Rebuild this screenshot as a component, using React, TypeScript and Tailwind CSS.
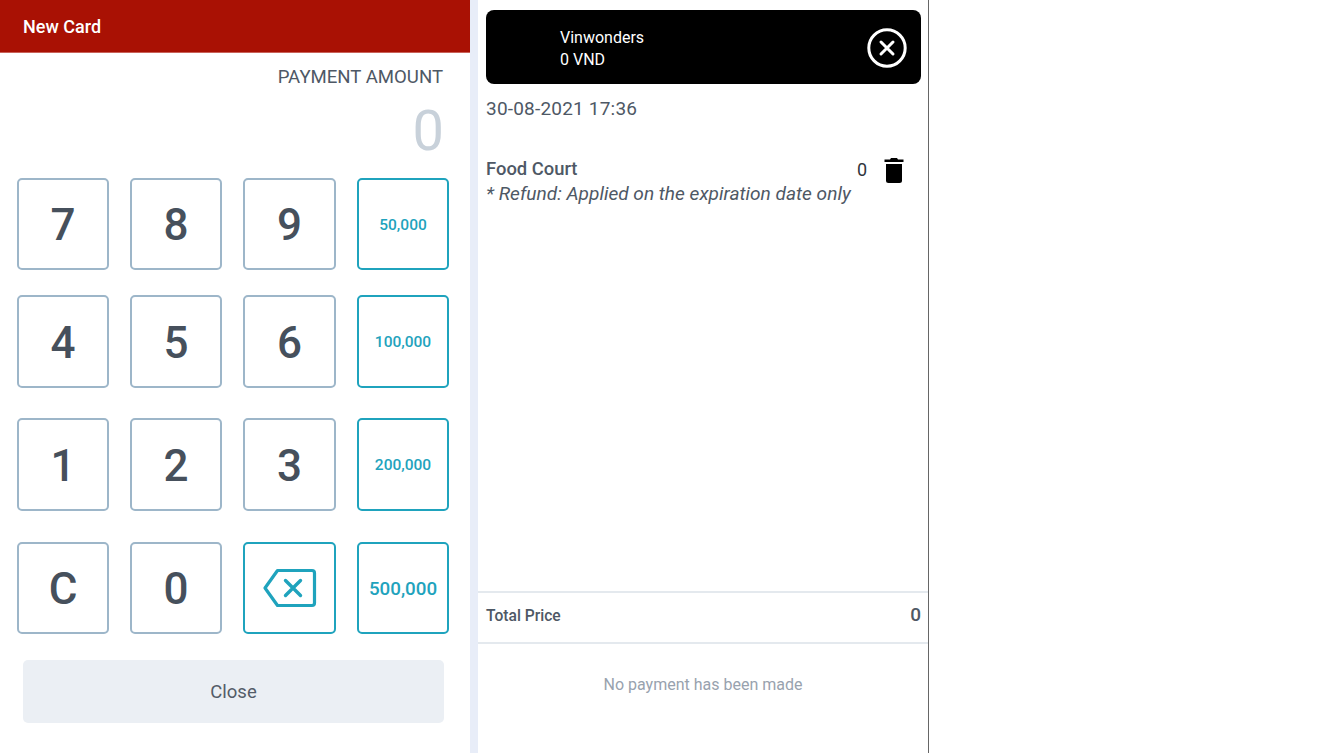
const NUM_KEY = "flex h-full items-center justify-center rounded-[5px] border-2 border-[#9db6c9] bg-white pt-[2px] text-[44px] font-[550] text-[#46505c]";
const QUICK_KEY = "flex h-full items-center justify-center rounded-[5px] border-2 border-[#1fa3bd] bg-white font-medium text-[#1fa3bd]";

function BackspaceIcon() {
  return (
    <svg width="54" height="40" viewBox="0 0 54 40" fill="none" stroke="#1fa3bd">
      <path d="M14.5 2.5H49a2.5 2.5 0 0 1 2.5 2.5v30a2.5 2.5 0 0 1-2.5 2.5H14.5L2 20Z" strokeWidth="3.2" strokeLinejoin="round" />
      <path d="M22.5 12.5l15 15M37.5 12.5l-15 15" strokeWidth="3.4" strokeLinecap="round" />
    </svg>
  );
}

function CloseCircleIcon() {
  return (
    <svg width="40" height="40" viewBox="0 0 40 40" fill="none" stroke="#fff">
      <circle cx="20" cy="20" r="18.2" strokeWidth="3" />
      <path d="M14 14l12 12M26 14L14 26" strokeWidth="3" strokeLinecap="round" />
    </svg>
  );
}

function TrashIcon() {
  return (
    <svg width="20" height="25" viewBox="0 0 20 25" fill="#000">
      <path d="M7 0h6l1 1.5h5.5V4H.5V1.5H6Z" />
      <path d="M2 6h16v16.5a2.5 2.5 0 0 1-2.5 2.5h-11A2.5 2.5 0 0 1 2 22.5Z" />
    </svg>
  );
}

export default function App() {
  return (
    <div className="flex h-[753px] w-[1319px] overflow-hidden bg-white font-['Roboto',sans-serif]">
      {/* keypad */}
      <div className="flex w-[470px] flex-col">
        <div className="flex h-[53px] items-center border-b border-[#c9625a] bg-[#a91104] pt-[2px] pl-[23px] text-lg font-medium text-white">
          New Card
        </div>
        <div className="mt-3 pr-[27px] text-right text-[18.6px] leading-6 text-[#4e5865]">PAYMENT AMOUNT</div>
        <div className="mt-[12px] mb-[-2px] pr-[26px] text-right text-[56px] leading-[60px] text-[#c8d1da]">0</div>

        <div className="mt-[19px] grid grid-cols-[92px_92px_93px_92px] gap-x-[21px] pl-[17px]">
          <div className="col-span-4 grid h-[92px] grid-cols-subgrid">
            <button className={NUM_KEY}>7</button>
            <button className={NUM_KEY}>8</button>
            <button className={NUM_KEY}>9</button>
            <button className={`${QUICK_KEY} pt-[3px] text-[15.5px]`}>50,000</button>
          </div>
          <div className="col-span-4 mt-[25px] grid h-[93px] grid-cols-subgrid">
            <button className={NUM_KEY}>4</button>
            <button className={NUM_KEY}>5</button>
            <button className={NUM_KEY}>6</button>
            <button className={`${QUICK_KEY} pt-[3px] text-[15.5px]`}>100,000</button>
          </div>
          <div className="col-span-4 mt-[30px] grid h-[93px] grid-cols-subgrid">
            <button className={NUM_KEY}>1</button>
            <button className={NUM_KEY}>2</button>
            <button className={NUM_KEY}>3</button>
            <button className={`${QUICK_KEY} pt-[3px] text-[15.5px]`}>200,000</button>
          </div>
          <div className="col-span-4 mt-[31px] grid h-[92px] grid-cols-subgrid">
            <button className={NUM_KEY}>C</button>
            <button className={NUM_KEY}>0</button>
            <button className={QUICK_KEY}>
              <BackspaceIcon />
            </button>
            <button className={`${QUICK_KEY} pt-[3px] text-[18.8px]`}>500,000</button>
          </div>
        </div>

        <button className="mt-[26px] ml-[23px] h-[63px] w-[421px] rounded-[5px] bg-[#ebeff4] pt-[2px] text-[18.5px] text-[#535c68]">
          Close
        </button>
      </div>

      <div className="w-2 bg-[#e8edf8]" />

      {/* order summary */}
      <div className="flex w-[451px] flex-col border-r border-[#666]">
        <div className="flex-1 pl-2 pr-[7px]">
          <div className="mt-[10px] flex h-[74px] items-center rounded-lg bg-black pl-[74px] pr-[14px] text-white">
            <div className="flex-1 pt-1 text-base leading-[22px]">
              <div>Vinwonders</div>
              <div>0 VND</div>
            </div>
            <div className="pt-[2px]">
              <CloseCircleIcon />
            </div>
          </div>
          <div className="mt-[13px] text-[19px] leading-6 tracking-[0.2px] text-[#4e5865]">30-08-2021 17:36</div>
          <div className="relative mt-[35px] text-[19px] leading-[25px] text-[#4e5865]">
            <div className="text-[18.4px] font-medium">Food Court</div>
            <div className="text-[19.1px] italic">* Refund: Applied on the expiration date only</div>
            <div className="absolute top-0 right-[54px] text-lg text-[#2f353c]">0</div>
            <div className="absolute top-[2px] right-[17px]">
              <TrashIcon />
            </div>
          </div>
        </div>
        <div className="mt-[-1px] flex h-[53px] items-center justify-between border-y-2 border-[#e4e9ee] pl-2 pr-[7px] pb-[2px] text-[#4e5865]">
          <span className="text-[15.6px] font-medium">Total Price</span>
          <span className="pb-[3px] text-[19px] font-medium">0</span>
        </div>
        <div className="flex h-[109px] justify-center pt-[29px] text-base leading-6 text-[#98a2ae]">
          No payment has been made
        </div>
      </div>
    </div>
  );
}
